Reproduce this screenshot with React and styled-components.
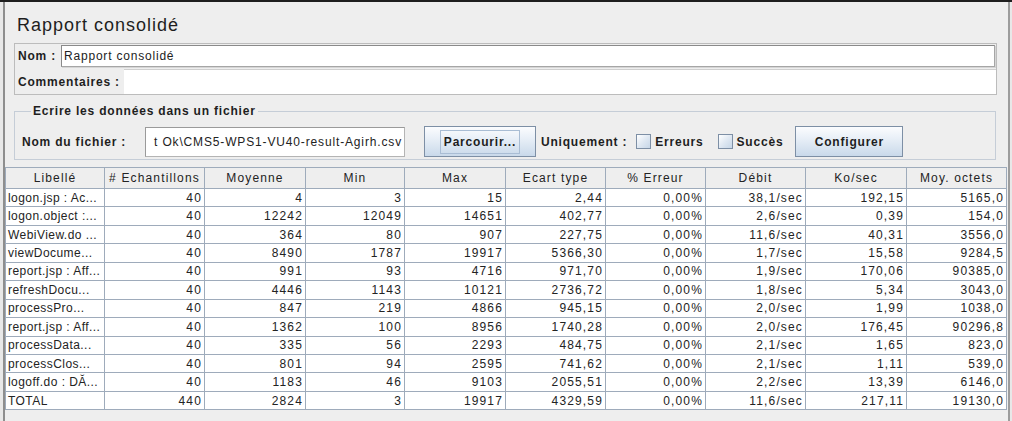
import React from "react";
import styled, { createGlobalStyle } from "styled-components";

const Global = createGlobalStyle`
  html, body { margin: 0; padding: 0; background: #e6e6e6; }
  body { font-family: "Liberation Sans", Arial, sans-serif; }
  * { box-sizing: border-box; }
`;

const Window = styled.div`
  width: 1012px;
  height: 421px;
  padding-left: 3px;
  background: #e8e8e8;
  border-top: 2px solid #1e1e1e;
  overflow: hidden;
`;

const Pane = styled.div`
  width: 1007px;
  height: 100%;
  background: #eeeeee;
  border-left: 2px solid #8e8e8e;
  border-right: 2px solid #9c9c9c;
  display: flex;
  flex-direction: column;
`;

const Title = styled.div`
  margin: 12px 0 0 12px;
  height: 22px;
  line-height: 22px;
  font-size: 18px;
  letter-spacing: 1px;
  color: #1e1e1e;
`;

const NamePanel = styled.div`
  margin: 7px 0 0 9px;
  width: 983px;
  border: 1px solid #bcbcbc;
  display: flex;
  flex-direction: column;
`;

const NameRow = styled.div`
  height: ${(p) => p.$h}px;
  display: flex;
  align-items: ${(p) => (p.$stretch ? "stretch" : "center")};
  padding: ${(p) => (p.$stretch ? "1px 0 0 3px" : "1px 1px 1px 3px")};
`;

const Label = styled.span`
  font-weight: bold;
  font-size: 12px;
  letter-spacing: 0.8px;
  color: #1e1e1e;
  white-space: nowrap;
  flex: none;
  width: ${(p) => (p.$w ? `${p.$w}px` : "auto")};
  margin-left: ${(p) => p.$ml || 0}px;
  align-self: center;
`;

const NameField = styled.div`
  flex: 1;
  height: 22px;
  margin-left: 5px;
  background: #fff;
  border: 1px solid #a6a6a6;
  border-top-color: #8a8a8a;
  border-left-color: #8a8a8a;
  box-shadow: 1px 1px 0 #d6d6d6;
  display: flex;
  align-items: center;
  padding-left: 2px;
  font-size: 12px;
  letter-spacing: 0.8px;
  color: #222;
`;

const CommentArea = styled.div`
  flex: 1;
  margin-left: 4px;
  background: #fff;
  border-top: 1px solid #cfcfcf;
`;

const FileSet = styled.fieldset`
  margin: 9px 0 0 9px;
  width: 982px;
  padding: 8px 0 2px 7px;
  border: 1px solid #c5cdd7;
  min-width: 0;
`;

const Legend = styled.legend`
  margin-left: 9px;
  padding: 0 2px;
  font-weight: bold;
  font-size: 12px;
  letter-spacing: 0.8px;
  line-height: 14px;
  color: #1e1e1e;
`;

const FileRow = styled.div`
  display: flex;
  align-items: center;
  height: 31px;
`;

const FileField = styled.div`
  flex: none;
  width: 260px;
  height: 30px;
  background: #fff;
  border: 1px solid #9a9a9a;
  border-bottom-color: #b4b4b4;
  border-right-color: #b4b4b4;
  display: flex;
  align-items: center;
  justify-content: flex-end;
  overflow: hidden;
  padding-right: 2px;
  font-size: 12px;
  letter-spacing: 0.85px;
  color: #222;
  white-space: nowrap;
`;

const Button = styled.div`
  flex: none;
  width: ${(p) => p.$w}px;
  height: 31px;
  margin-left: ${(p) => p.$ml}px;
  border: 1px solid #7d8fa5;
  background: linear-gradient(to bottom, #fbfcfe 0%, #e8eff7 40%, #c9d9ea 100%);
  display: flex;
  align-items: center;
  justify-content: center;
  font-weight: bold;
  font-size: 12px;
  letter-spacing: 0.8px;
  color: #1e1e1e;
`;

const Focus = styled.span`
  padding: 4px 3px;
  border: 1px solid ${(p) => (p.$on ? "#a9bdd4" : "transparent")};
`;

const Check = styled.span`
  flex: none;
  width: 15px;
  height: 15px;
  margin: 0 4px 0 ${(p) => p.$ml}px;
  border: 1px solid #7d8fa5;
  background: linear-gradient(to bottom right, #ffffff 0%, #dfe8f2 50%, #c6d6e7 100%);
`;

const Grid = styled.table`
  margin-top: 7px;
  width: 1001px;
  border-collapse: collapse;
  table-layout: fixed;
  font-size: 12px;
  letter-spacing: 1.15px;
  color: #232323;
`;

const HeadCell = styled.th`
  height: 21px;
  padding: 0;
  font-weight: normal;
  text-align: center;
  background: #eeeeee;
  border: 1px solid #9eabbb;
  white-space: nowrap;
  overflow: hidden;
`;

const Row = styled.tr`
  height: 18.45px;
`;

const Cell = styled.td`
  padding: 0;
  padding-left: ${(p) => (p.$left ? "2px" : "0")};
  padding-right: ${(p) => (p.$left ? "0" : "2px")};
  text-align: ${(p) => (p.$left ? "left" : "right")};
  letter-spacing: ${(p) => (p.$left ? "0.45px" : "1.15px")};
  background: #fff;
  border: 1px solid #9eabbb;
  white-space: nowrap;
  overflow: hidden;
  line-height: 16px;
`;

const widths = [99, 100, 101, 99, 101, 100, 100, 100, 101, 100];
const headers = ["Libellé", "# Echantillons", "Moyenne", "Min", "Max", "Ecart type", "% Erreur", "Débit", "Ko/sec", "Moy. octets"];
const rows = [
  ["logon.jsp : Ac...", "40", "4", "3", "15", "2,44", "0,00%", "38,1/sec", "192,15", "5165,0"],
  ["logon.object :...", "40", "12242", "12049", "14651", "402,77", "0,00%", "2,6/sec", "0,39", "154,0"],
  ["WebiView.do ...", "40", "364", "80", "907", "227,75", "0,00%", "11,6/sec", "40,31", "3556,0"],
  ["viewDocume...", "40", "8490", "1787", "19917", "5366,30", "0,00%", "1,7/sec", "15,58", "9284,5"],
  ["report.jsp : Aff...", "40", "991", "93", "4716", "971,70", "0,00%", "1,9/sec", "170,06", "90385,0"],
  ["refreshDocu...", "40", "4446", "1143", "10121", "2736,72", "0,00%", "1,8/sec", "5,34", "3043,0"],
  ["processPro...", "40", "847", "219", "4866", "945,15", "0,00%", "2,0/sec", "1,99", "1038,0"],
  ["report.jsp : Aff...", "40", "1362", "100", "8956", "1740,28", "0,00%", "2,0/sec", "176,45", "90296,8"],
  ["processData...", "40", "335", "56", "2293", "484,75", "0,00%", "2,1/sec", "1,65", "823,0"],
  ["processClos...", "40", "801", "94", "2595", "741,62", "0,00%", "2,1/sec", "1,11", "539,0"],
  ["logoff.do : DĂ...", "40", "1183", "46", "9103", "2055,51", "0,00%", "2,2/sec", "13,39", "6146,0"],
  ["TOTAL", "440", "2824", "3", "19917", "4329,59", "0,00%", "11,6/sec", "217,11", "19130,0"],
];

export default function App() {
  return (
    <>
      <Global />
      <Window>
        <Pane>
          <Title>Rapport consolidé</Title>
          <NamePanel>
            <NameRow $h={24}>
              <Label>Nom :</Label>
              <NameField>Rapport consolidé</NameField>
            </NameRow>
            <NameRow $h={26} $stretch>
              <Label>Commentaires :</Label>
              <CommentArea />
            </NameRow>
          </NamePanel>
          <FileSet>
            <Legend>Ecrire les données dans un fichier</Legend>
            <FileRow>
              <Label $w={123}>Nom du fichier :</Label>
              <FileField>t Ok\CMS5-WPS1-VU40-result-Agirh.csv</FileField>
              <Button $w={112} $ml={19}>
                <Focus $on>Parcourir...</Focus>
              </Button>
              <Label $ml={5}>Uniquement :</Label>
              <Check $ml={9} />
              <Label>Erreurs</Label>
              <Check $ml={14} />
              <Label>Succès</Label>
              <Button $w={108} $ml={12}>
                <Focus>Configurer</Focus>
              </Button>
            </FileRow>
          </FileSet>
          <Grid>
            <colgroup>
              {widths.map((w, i) => (
                <col key={i} style={{ width: w }} />
              ))}
            </colgroup>
            <thead>
              <tr>
                {headers.map((h) => (
                  <HeadCell key={h}>{h}</HeadCell>
                ))}
              </tr>
            </thead>
            <tbody>
              {rows.map((r, i) => (
                <Row key={i}>
                  {r.map((c, j) => (
                    <Cell key={j} $left={j === 0}>
                      {c}
                    </Cell>
                  ))}
                </Row>
              ))}
            </tbody>
          </Grid>
        </Pane>
      </Window>
    </>
  );
}
